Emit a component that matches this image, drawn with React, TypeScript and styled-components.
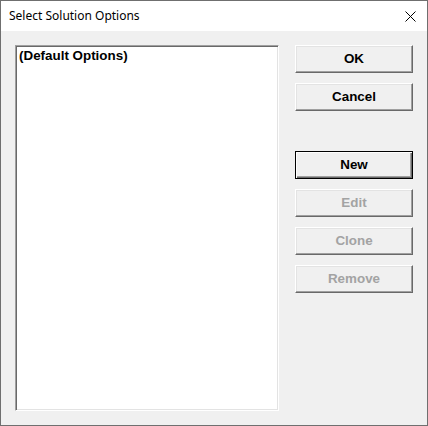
import React from 'react';
import styled, { createGlobalStyle } from 'styled-components';

const GlobalStyle = createGlobalStyle`
  html, body {
    margin: 0;
    padding: 0;
    background: #ffffff;
  }
`;

// Dialog frame
const Window = styled.div`
  box-sizing: border-box;
  width: 428px;
  height: 426px;
  border: 1px solid #6f6f6f;
  background-color: #f0f0f0;
  display: flex;
  flex-direction: column;
`;

const TitleBar = styled.div`
  height: 30px;
  background-color: #ffffff;
  display: flex;
  align-items: center;
  justify-content: space-between;
  padding-left: 8px;
  flex-shrink: 0;
`;

const TitleText = styled.span`
  font-family: 'Noto Sans', 'Open Sans', sans-serif;
  font-size: 12px;
  color: #000000;
  padding-bottom: 1px;
`;

const CloseButton = styled.div`
  width: 45px;
  height: 30px;
  display: flex;
  align-items: center;
  justify-content: center;
  margin-right: -6px;
`;

const Body = styled.div`
  flex: 1;
  display: flex;
  padding: 14px;
  gap: 16px;
`;

const ListBox = styled.div`
  box-sizing: border-box;
  width: 264px;
  height: 366px;
  background-color: #ffffff;
  border: 1px solid;
  border-color: #a0a0a0 #ffffff #ffffff #a0a0a0;
  box-shadow: inset 1px 1px #696969, inset -1px -1px #e3e3e3;
  padding: 2px 3px;
`;

const ListItem = styled.div`
  font-family: 'Liberation Sans', Arial, sans-serif;
  font-weight: bold;
  font-size: 13.4px;
  line-height: 16px;
  color: #000000;
`;

const ButtonColumn = styled.div`
  display: flex;
  flex-direction: column;
  gap: 10px;
`;

const DialogButton = styled.div<{ $disabled?: boolean; $default?: boolean; $spaced?: boolean }>`
  box-sizing: border-box;
  width: 118px;
  height: 28px;
  display: flex;
  align-items: center;
  justify-content: center;
  background-color: #f0f0f0;
  font-family: 'Liberation Sans', Arial, sans-serif;
  font-weight: bold;
  font-size: 13.4px;
  color: ${p => (p.$disabled ? '#a3a3a3' : '#000000')};
  margin-top: ${p => (p.$spaced ? '30px' : '0')};
  border: 1px solid;
  border-color: ${p => (p.$default ? '#000000' : '#ffffff #696969 #696969 #ffffff')};
  box-shadow: ${p =>
    p.$default
      ? 'inset 1px 1px #ffffff, inset -1px -1px #696969, inset -2px -2px #a0a0a0'
      : 'inset -1px -1px #a0a0a0, inset 1px 1px #e3e3e3'};
  padding-bottom: 1px;
`;

const buttons = [
  { label: 'OK' },
  { label: 'Cancel' },
  { label: 'New', isDefault: true, spaced: true },
  { label: 'Edit', disabled: true },
  { label: 'Clone', disabled: true },
  { label: 'Remove', disabled: true },
];

const App: React.FC = () => {
  return (
    <>
      <GlobalStyle />
      <Window>
        <TitleBar>
          <TitleText>Select Solution Options</TitleText>
          <CloseButton>
            <svg width="11" height="11" viewBox="0 0 11 11">
              <path d="M0.5 0.5 L10.5 10.5 M10.5 0.5 L0.5 10.5" stroke="#000" strokeWidth="1" fill="none" />
            </svg>
          </CloseButton>
        </TitleBar>
        <Body>
          <ListBox>
            <ListItem>(Default Options)</ListItem>
          </ListBox>
          <ButtonColumn>
            {buttons.map(b => (
              <DialogButton
                key={b.label}
                $disabled={b.disabled}
                $default={b.isDefault}
                $spaced={b.spaced}
              >
                {b.label}
              </DialogButton>
            ))}
          </ButtonColumn>
        </Body>
      </Window>
    </>
  );
};

export default App;
